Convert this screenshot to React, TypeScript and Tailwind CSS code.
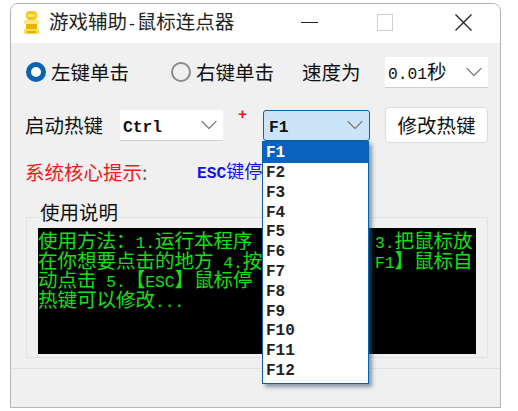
import { ChevronDown } from 'lucide-react';

const CJK = "font-['Noto_Sans_CJK_SC',sans-serif]";
const MONO = "font-['Liberation_Mono',monospace]";

const hotkeys = ['F1', 'F2', 'F3', 'F4', 'F5', 'F6', 'F7', 'F8', 'F9', 'F10', 'F11', 'F12'];

// left part stops at the open list, right part comes out after it
const helpLines = [
  { left: '使用方法：1.运行本程序', right: '3.把鼠标放' },
  { left: '在你想要点击的地方 4.按', right: 'F1】鼠标自' },
  { left: '动点击 5.【ESC】鼠标停', right: '' },
  { left: '热键可以修改...', right: '' },
];

// latin runs in the old mono face are narrower than the chinese ones
const Mixed = ({ text, bold }: { text: string; bold?: boolean }) => (
  <span>
    {text.split(/([\x20-\x7e]+)/).map((part, i) =>
      i % 2 === 1 ? (
        <span key={i} className={`text-[16.25px] whitespace-pre ${MONO} ${bold ? 'font-bold' : ''}`}>
          {part}
        </span>
      ) : (
        part
      )
    )}
  </span>
);

const Arrow = () => <ChevronDown size={28} strokeWidth={1.1} className="text-[#808080] shrink-0" />;

const App = () => {
  return (
    <div className={`w-[518px] h-[411px] bg-white pt-[3px] pl-[10px] overflow-hidden ${CJK}`}>
      <div className="relative w-[491px] h-[405px] flex flex-col bg-[#f0f0f0] border border-[#b4b4b4] rounded-t-lg overflow-hidden">
        {/* title bar */}
        <div className="h-[39px] flex items-center pb-[3px] bg-white shrink-0">
          <svg width="17" height="25" viewBox="0 0 17 25" className="ml-[12px] mt-[3px]">
            <rect x="3" y="0" width="11" height="9" rx="4" fill="#f5c518" />
            <rect x="5" y="3" width="7" height="3" fill="#fbe27a" />
            <rect x="1" y="9" width="15" height="4" fill="#fde98c" />
            <rect x="3" y="13" width="11" height="5" fill="#eab308" />
            <rect x="1" y="18" width="15" height="5" rx="1" fill="#fde047" />
            <rect x="4" y="20" width="9" height="2" fill="#e8a80c" />
          </svg>
          <span className="ml-[9px] w-[188px] text-[19.5px] leading-none text-[#222] whitespace-nowrap">
            <Mixed text="游戏辅助-鼠标连点器" />
          </span>
          <svg width="17" height="17" viewBox="0 0 17 17" className="ml-[64px]">
            <path d="M0 8.5H17" stroke="#222" strokeWidth="1.2" />
          </svg>
          <svg width="16" height="17" viewBox="0 0 16 17" className="ml-[59px]">
            <rect x="0.5" y="0.5" width="15" height="16" fill="none" stroke="#d0d0d0" />
          </svg>
          <svg width="17" height="17" viewBox="0 0 17 17" className="ml-[62px]">
            <path d="M0.5 0.5L16.5 16.5M16.5 0.5L0.5 16.5" stroke="#222" strokeWidth="1.3" />
          </svg>
        </div>

        <div className="flex-1 flex flex-col">
          {/* click mode + speed */}
          <div className="h-[44px] mt-[7px] flex items-center pl-[15px] text-[19.5px] text-[#111] whitespace-nowrap">
            <span className="w-[20px] h-[20px] rounded-full border-[5px] border-[#0a62b4] bg-white shrink-0" />
            <span className="ml-[5px] w-[120px]">左键单击</span>
            <span className="w-[20px] h-[20px] rounded-full border-2 border-[#8a8a8a] shrink-0" />
            <span className="ml-[5px] w-[106px]">右键单击</span>
            <span className="w-[83px]">速度为</span>
            <div className="w-[103px] h-[31px] flex items-center justify-between pl-[3px] bg-white border-b border-[#d0d0d0]">
              <Mixed text="0.01秒" />
              <Arrow />
            </div>
          </div>

          {/* hotkey row */}
          <div className="h-[36px] mt-[13px] flex items-center pl-[14px] text-[19.5px] text-[#111] whitespace-nowrap">
            <span className="w-[95px]">启动热键</span>
            <div className="w-[103px] h-[31px] flex items-center justify-between pl-[3px] bg-white border-b border-[#d0d0d0]">
              <Mixed text="Ctrl" bold />
              <Arrow />
            </div>
            <span className={`ml-[15px] w-[25px] -mt-[18px] text-[#f01020] text-[15px] font-bold ${MONO}`}>+</span>
            <div className="w-[107px] h-[31px] flex items-center justify-between pl-[5px] bg-[#cce4f7] border border-[#0a62a8] rounded-[3px]">
              <Mixed text="F1" bold />
              <Arrow />
            </div>
            <div className="ml-[15px] w-[103px] h-[36px] flex items-center justify-center bg-white border border-[#dcdcdc] rounded-[4px]">
              修改热键
            </div>
          </div>

          {/* status */}
          <div className="h-[24px] mt-[17px] flex items-center pl-[14px] text-[19.5px] whitespace-nowrap">
            <span className="w-[172px] text-[#f01818]">系统核心提示<span className="text-[#666]">:</span></span>
            <span className="text-[18px] text-[#1414e0]">
              <Mixed text="ESC键停" bold />
            </span>
          </div>

          {/* usage group */}
          <div className="relative ml-[15px] mt-[33px] h-[141px] w-[462px] border border-[#e2e2e2] pt-[10px] pl-[11px]">
            <span className="absolute left-[12px] -top-[17px] bg-[#f0f0f0] px-[1px] text-[19.5px] leading-[22px] text-[#111]">使用说明</span>
            <div className="w-[438px] h-[126px] pt-[2px] bg-black text-[#14e014] text-[19.5px] leading-[19.5px]">
              {helpLines.map((line) => (
                <div key={line.left} className="flex h-[19.5px] whitespace-nowrap">
                  <div className="w-[224px]"><Mixed text={line.left} /></div>
                  {line.right && <div className="ml-[113px]"><Mixed text={line.right} /></div>}
                </div>
              ))}
            </div>
          </div>

          {/* status bar */}
          <div className="mt-[10px] flex-1 border-t border-[#e0e0e0]" />
        </div>

        {/* open dropdown list */}
        <div className={`absolute left-[251px] top-[137px] w-[107px] h-[243px] bg-white border border-[#0a62a8] shadow-[3px_3px_4px_rgba(60,90,120,0.6)] text-[16px] font-bold text-[#222] ${MONO}`}>
          {hotkeys.map((key, i) => (
            <div
              key={key}
              className={i === 0 ? 'h-[21px] leading-[23px] pl-[3px] bg-[#0a62c0] text-white' : 'h-[19.8px] leading-[20px] pl-[3px]'}
            >
              {key}
            </div>
          ))}
        </div>
      </div>
    </div>
  );
};

export default App;
